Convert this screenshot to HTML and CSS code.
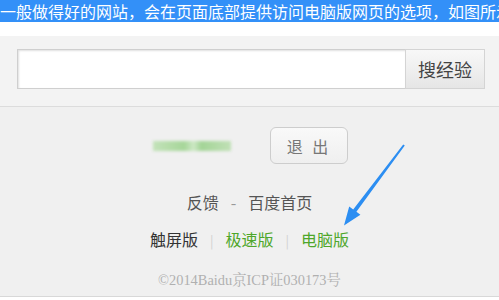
FILE: index.html
```html
<!DOCTYPE html>
<html>
<head>
  <title>百度经验</title>
  <link rel="stylesheet" href="styles.css">
</head>
<body>
  <div class="caption">一般做得好的网站，会在页面底部提供访问电脑版网页的选项，如图所示。</div>

  <div class="search-bar">
    <input type="text" class="search-input">
    <button class="search-button">搜经验</button>
  </div>

  <div class="footer">
    <div class="user-row">
      <div class="user-name"></div>
      <button class="logout-button">退 出</button>
    </div>
    <div class="links">反馈<span class="dash">-</span>百度首页</div>
    <div class="versions">
      <span class="current">触屏版</span><span class="sep">|</span><span class="green">极速版</span><span class="sep">|</span><span class="green">电脑版</span>
    </div>
    <div class="copyright">©2014Baidu京ICP证030173号</div>
  </div>

  <svg class="arrow" width="499" height="300" viewBox="0 0 499 300">
    <polygon fill="#2c8ef2" points="404.8,145.6 403.2,144.4 353.2,209.4 349.2,206.4 344,225.5 360.4,214.8 356.4,211.8"/>
  </svg>
</body>
</html>
```

FILE: styles.css
```css
body {
  margin: 0;
  position: relative;
  width: 499px;
  height: 300px;
  overflow: hidden;
  background-color: #fff;
  font-family: "Noto Sans CJK SC", "Noto Sans", sans-serif;
}

.caption {
  height: 22px;
  line-height: 22px;
  font-size: 16px;
  color: #fff;
  background-color: #3390f8;
  white-space: nowrap;
  overflow: hidden;
}

.search-bar {
  display: flex;
  margin-top: 14px;
  padding: 13px 14px 17px 17px;
  background-color: #f3f3f3;
  border-bottom: 1px solid #dcdcdc;
}

.search-input {
  flex: 1;
  height: 40px;
  box-sizing: border-box;
  border: 1px solid #cfcfcf;
  border-right: none;
  box-shadow: inset 1px 1px 2px #e0e0e0;
  background-color: #fff;
  margin: 0;
}

.search-button {
  width: 80px;
  height: 40px;
  box-sizing: border-box;
  margin: 0;
  border: 1px solid #d4d4d4;
  background: linear-gradient(#f8f8f8, #e6e6e6);
  font-family: "Noto Sans CJK SC", sans-serif;
  font-size: 18px;
  color: #444;
}

.footer {
  display: flex;
  flex-direction: column;
  align-items: center;
  height: 169px;
  padding-top: 20px;
  background-color: #f0f0f0;
  border-bottom: 1px solid #d8d8d8;
}

.user-row {
  display: flex;
  align-items: center;
  gap: 39px;
  height: 37px;
  margin-left: 2px;
}

.user-name {
  width: 78px;
  height: 10px;
  background: linear-gradient(90deg, #c3e2b9 0%, #a6d699 40%, #cde8c5 52%, #a3d496 62%, #c0e0b6 100%);
  filter: blur(1.5px);
}

.logout-button {
  width: 78px;
  height: 37px;
  box-sizing: border-box;
  border: 1px solid #cdcdcd;
  border-radius: 6px;
  background: linear-gradient(#f9f9f9, #efefef);
  font-family: "Noto Sans CJK SC", sans-serif;
  font-size: 16px;
  color: #777;
  letter-spacing: 3px;
}

.links {
  margin-top: 27px;
  line-height: 22px;
  font-size: 16px;
  color: #555;
}

.dash {
  margin: 0 12px;
  color: #999;
}

.versions {
  margin-top: 15px;
  line-height: 22px;
  font-size: 16px;
}

.current {
  color: #333;
}

.green {
  color: #4ea72a;
}

.sep {
  margin: 0 12px;
  color: #d0d0d0;
  font-size: 13px;
}

.copyright {
  margin-top: 18px;
  line-height: 20px;
  font-family: "Liberation Serif", "Noto Serif CJK SC", "Noto Sans CJK SC", serif;
  font-size: 14.4px;
  color: #b0b0b0;
}

.arrow {
  position: absolute;
  top: 0;
  left: 0;
  pointer-events: none;
}
```
